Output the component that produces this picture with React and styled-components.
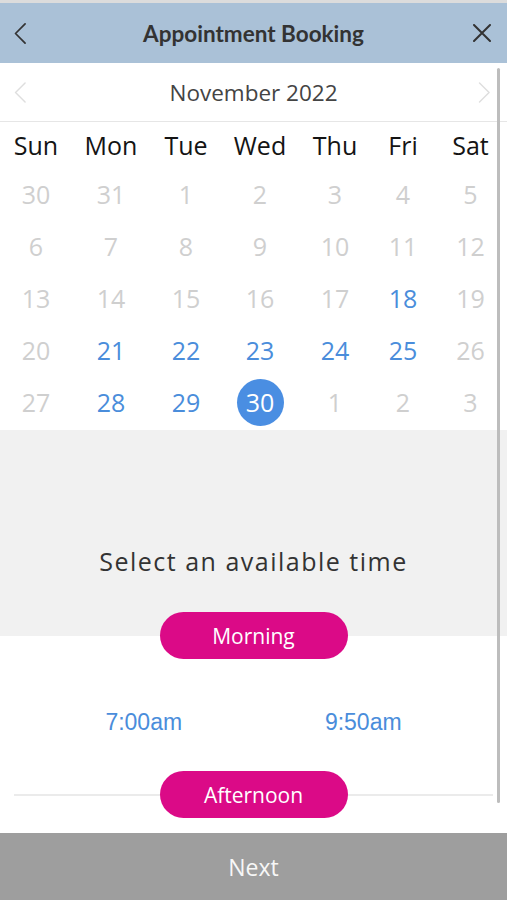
import styled, { createGlobalStyle } from "styled-components";

const GlobalStyle = createGlobalStyle`
  html, body {
    margin: 0;
    padding: 0;
    background: #ffffff;
  }
  * {
    box-sizing: border-box;
  }
`;

// Layout
const Screen = styled.div`
  width: 507px;
  height: 900px;
  display: flex;
  flex-direction: column;
  overflow: hidden;
  font-family: "Open Sans", "Noto Sans", sans-serif;
  border-top: 3px solid #dcdcdc;
`;

const Header = styled.header`
  height: 60px;
  flex-shrink: 0;
  background-color: #aac1d7;
  display: grid;
  grid-template-columns: 48px 1fr 48px;
  align-items: center;
`;

const Title = styled.h1`
  margin: 0;
  text-align: center;
  font-family: Lato, "Open Sans", sans-serif;
  font-weight: 700;
  font-size: 22.5px;
  color: #333333;
`;

const IconButton = styled.button`
  border: none;
  background: none;
  padding: 0;
  display: flex;
  align-items: center;
  justify-content: ${(p) => (p.$end ? "flex-end" : "flex-start")};
  padding-left: ${(p) => (p.$end ? "0" : "14px")};
  padding-right: ${(p) => (p.$end ? "16px" : "0")};
`;

const Body = styled.main`
  flex: 1;
  position: relative;
  display: flex;
  flex-direction: column;
`;

const Scrollbar = styled.div`
  position: absolute;
  right: 7px;
  top: 5px;
  bottom: 15px;
  width: 3px;
  background-color: #bdbdbd;
  border-radius: 2px;
`;

const MonthBar = styled.div`
  height: 59px;
  display: grid;
  grid-template-columns: 48px 1fr 48px;
  align-items: center;
  border-bottom: 1px solid #e6e6e6;
`;

const MonthLabel = styled.div`
  text-align: center;
  font-size: 22.5px;
  color: #444444;
`;

// Calendar
const Calendar = styled.div`
  display: grid;
  grid-template-columns: 72px 78px 72px 76px 74px 62px 73px;
  grid-template-rows: 46px;
  grid-auto-rows: 52px;
  padding-bottom: 2px;
`;

const WeekDay = styled.div`
  display: flex;
  align-items: center;
  justify-content: center;
  font-size: 25px;
  color: #141414;
`;

const Day = styled.div`
  display: flex;
  align-items: center;
  justify-content: center;
  font-size: 25px;
  color: ${(p) => (p.$available ? "#4a8ddb" : "#cfcfcf")};
`;

const Selected = styled.span`
  width: 47px;
  height: 47px;
  border-radius: 50%;
  background-color: #4a8ee2;
  color: #ffffff;
  display: flex;
  align-items: center;
  justify-content: center;
`;

// Times
const Intro = styled.div`
  height: 182px;
  background-color: #f1f1f1;
  display: flex;
  align-items: flex-end;
  justify-content: center;
  padding-bottom: 36px;
`;

const IntroText = styled.p`
  margin: 0;
  font-size: 25px;
  line-height: 30px;
  letter-spacing: 1.5px;
  color: #333333;
`;

const PeriodRow = styled.div`
  height: 47px;
  display: flex;
  justify-content: center;
  background: ${(p) =>
    p.$split
      ? "linear-gradient(#f1f1f1 0 50%, #ffffff 50% 100%)"
      : "linear-gradient(transparent 0 calc(50% - 1px), #ebebeb calc(50% - 1px) calc(50% + 1px), transparent calc(50% + 1px))"};
  margin: ${(p) => (p.$split ? "0" : "0 14px")};
`;

const Pill = styled.div`
  width: 188px;
  height: 47px;
  border-radius: 24px;
  background-color: #db0a87;
  color: #ffffff;
  font-size: 21px;
  display: flex;
  align-items: center;
  justify-content: center;
`;

const TimesRow = styled.div`
  height: 112px;
  padding: 14px 34px 0;
  display: grid;
  grid-template-columns: 1fr 1fr;
  align-items: center;
`;

const Time = styled.div`
  text-align: center;
  font-family: "Liberation Sans", Arial, sans-serif;
  font-size: 23px;
  color: #4a8ddb;
`;

const NextBar = styled.button`
  height: 67px;
  flex-shrink: 0;
  border: none;
  width: 100%;
  margin-top: 15px;
  background-color: #9e9e9e;
  color: #f7f7f7;
  font-family: "Open Sans", sans-serif;
  font-size: 23px;
`;

const Chevron = ({ dir = "left", color, size = 22, width = 1.8 }) => (
  <svg width={size * 0.6} height={size} viewBox="0 0 12 22" fill="none">
    <path
      d={dir === "left" ? "M11 1 L1 11 L11 21" : "M1 1 L11 11 L1 21"}
      stroke={color}
      strokeWidth={width}
      strokeLinecap="round"
      strokeLinejoin="round"
    />
  </svg>
);

const weekdays = ["Sun", "Mon", "Tue", "Wed", "Thu", "Fri", "Sat"];

const days = [
  30, 31, 1, 2, 3, 4, 5,
  6, 7, 8, 9, 10, 11, 12,
  13, 14, 15, 16, 17, 18, 19,
  20, 21, 22, 23, 24, 25, 26,
  27, 28, 29, 30, 1, 2, 3,
];

// indexes into days[] that can be booked
const available = new Set([19, 22, 23, 24, 25, 26, 29, 30]);
const selectedIndex = 31;

function App() {
  return (
    <>
      <GlobalStyle />
      <Screen>
        <Header>
          <IconButton>
            <Chevron dir="left" color="#333" size={21} />
          </IconButton>
          <Title>Appointment Booking</Title>
          <IconButton $end>
            <svg width="18" height="18" viewBox="0 0 18 18">
              <path d="M1 1 L17 17 M17 1 L1 17" stroke="#333" strokeWidth="2" strokeLinecap="round" />
            </svg>
          </IconButton>
        </Header>
        <Body>
          <MonthBar>
            <IconButton>
              <Chevron dir="left" color="#dedede" size={21} width={1.5} />
            </IconButton>
            <MonthLabel>November 2022</MonthLabel>
            <IconButton $end>
              <Chevron dir="right" color="#dedede" size={21} width={1.5} />
            </IconButton>
          </MonthBar>
          <Calendar>
            {weekdays.map((d) => (
              <WeekDay key={d}>{d}</WeekDay>
            ))}
            {days.map((d, i) => (
              <Day key={i} $available={available.has(i)}>
                {i === selectedIndex ? <Selected>{d}</Selected> : d}
              </Day>
            ))}
          </Calendar>
          <Intro>
            <IntroText>Select an available time</IntroText>
          </Intro>
          <PeriodRow $split>
            <Pill>Morning</Pill>
          </PeriodRow>
          <TimesRow>
            <Time>7:00am</Time>
            <Time>9:50am</Time>
          </TimesRow>
          <PeriodRow>
            <Pill>Afternoon</Pill>
          </PeriodRow>
          <Scrollbar />
        </Body>
        <NextBar>Next</NextBar>
      </Screen>
    </>
  );
}

export default App;
